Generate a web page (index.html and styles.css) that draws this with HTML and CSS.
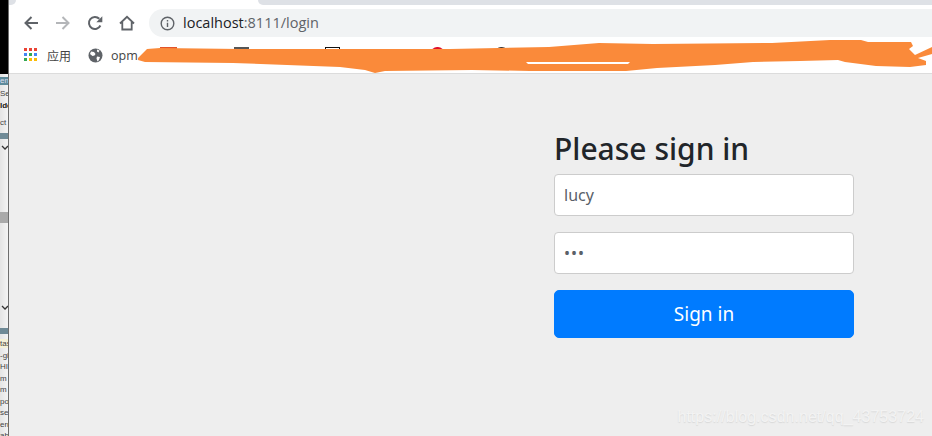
FILE: index.html
```html
<!DOCTYPE html>
<html lang="en">
<head>
<meta charset="utf-8">
<title>Please sign in</title>
<link rel="stylesheet" href="styles.css">
</head>
<body>
<div class="strip">
  <div class="strip-black"></div>
  <div class="strip-list">
    <div class="sl sl-head">em</div>
    <div class="sl sl-sev">Sev</div>
    <div class="sl sl-bold">lder</div>
    <div class="sl sl-ct">ct</div>
    <div class="folder folder-top"></div>
    <svg class="chev" width="8" height="6" viewBox="0 0 8 6"><path d="M1 1l3 3 3-3" fill="none" stroke="#333" stroke-width="1.3"/></svg>
    <div class="strip-block"></div>
    <svg class="chev chev-low" width="8" height="6" viewBox="0 0 8 6"><path d="M1 1l3 3 3-3" fill="none" stroke="#333" stroke-width="1.3"/></svg>
    <div class="folder folder-low"></div>
    <div class="sl sl-row sl-hl">tas</div>
    <div class="sl sl-row">-gi</div>
    <div class="sl sl-row">HI</div>
    <div class="sl sl-row">m</div>
    <div class="sl sl-row">m</div>
    <div class="sl sl-row">po</div>
    <div class="sl sl-row">se</div>
    <div class="sl sl-row">err</div>
    <div class="sl sl-row">ab</div>
  </div>
</div>

<div class="window">
  <div class="tabs">
    <div class="tab-left"></div>
    <div class="tab-active"></div>
    <div class="tab-rest"></div>
  </div>

  <div class="toolbar">
    <svg class="nav nav-back" width="16" height="16" viewBox="0 0 16 16"><path d="M15 8H2.500M8.500 2L2.500 8l6 6" fill="none" stroke="#5f6368" stroke-width="2"/></svg>
    <svg class="nav nav-fwd" width="16" height="16" viewBox="0 0 16 16"><path d="M1 8h12.500M7.500 2l6 6-6 6" fill="none" stroke="#b4b6b9" stroke-width="2"/></svg>
    <svg class="nav nav-reload" width="16" height="16" viewBox="0 0 16 16"><path d="M13.400 10.500A6 6 0 1 1 12.300 3.800" fill="none" stroke="#5f6368" stroke-width="2"/><path d="M15.300 1.200v6h-6z" fill="#5f6368"/></svg>
    <svg class="nav nav-home" width="16" height="16" viewBox="0 0 16 16"><path d="M1 8.500L8 1.800l7 6.700M3.300 7v7.500h9.400V7" fill="none" stroke="#5f6368" stroke-width="1.800"/></svg>
    <div class="omnibox">
      <svg class="info" width="15" height="15" viewBox="0 0 15 15"><circle cx="7.500" cy="7.500" r="6.300" fill="none" stroke="#5f6368" stroke-width="1.400"/><path d="M6.800 6.700h1.400v4.300H6.800zM6.800 4h1.400v1.400H6.800z" fill="#5f6368"/></svg>
      <span class="url"><span class="url-host">localhost</span>:8111/login</span>
    </div>
  </div>

  <div class="bookmarks">
    <div class="apps">
      <i class="r"></i><i class="r"></i><i class="r"></i>
      <i class="b"></i><i class="g"></i><i class="b"></i>
      <i class="g"></i><i class="y"></i><i class="y"></i>
    </div>
    <span class="bm-label">应用</span>
    <svg class="globe" width="15" height="15" viewBox="0 0 15 15"><circle cx="7.500" cy="7.500" r="7" fill="#5f6368"/><path d="M3 3.500l3 .5 1.500 2-1 1.500-2 .5-2.500-2zM9 8.500l3 .5-1 3-1.500 1.500-1-3zM9 1.500l2.500 1-1 2-1.500-1z" fill="#fff"/></svg>
    <span class="bm-text">opm</span>
    <div class="bm-peek peek-a"></div>
    <div class="bm-peek peek-b"></div>
    <div class="bm-peek peek-c"></div>
    <div class="bm-peek peek-d"></div>
    <div class="bm-peek peek-e"></div>
    <svg class="scribble" width="932" height="73" viewBox="0 0 932 73">
      <path fill="#fa8a3a" d="M138 58L147 49 160 48 240 49 330 49 450 49 549 47 599 43 653 44 772 43 830 40 861 40 868 42 911 42 913 46 909 49 915 55 932 47 932 54 918 58 926 61 926 65 910 67 876 66 845 62 838 60 800 61 753 62 715 65 657 68 626 71 530 71 472 70 385 71 375 73 365 70 340 67 233 63 145 62 138 60Z"/>
      <path fill="#fff" d="M526 62H630L628 64H528Z"/>
    </svg>
  </div>

  <main class="page">
    <form class="signin">
      <h1 class="signin-title">Please sign in</h1>
      <input class="field field-user" type="text" value="lucy">
      <input class="field field-pass" type="password" value="abc">
      <button class="submit" type="button">Sign in</button>
    </form>
    <div class="watermark">https://blog.csdn.net/qq_43753724</div>
  </main>
</div>
</body>
</html>
```

FILE: styles.css
```css
* { margin:0; padding:0; box-sizing:border-box; }
html, body { width:100%; height:100%; overflow:hidden; }
body { display:flex; background:#eee; font-family:"Noto Sans", "Open Sans", "Noto Sans CJK SC", sans-serif; color:#212529; }

/* window peeking out at the left edge */
.strip { width:9px; flex:none; height:436px; overflow:hidden; border-right:1px solid #6d6d6d; background:linear-gradient(to right, #e4e4e4, #f4f4f4); }
.strip-black { height:74px; margin-right:-1px; background:#000; }
.strip-list { display:flex; flex-direction:column; font:8px/9px "Liberation Sans", sans-serif; color:#444; white-space:nowrap; overflow:hidden; }
.sl { height:9px; flex:none; overflow:hidden; }
.sl-head { background:#5d8b9b; color:#dde; height:8px; margin-top:3px; line-height:8px; }
.sl-sev { margin-top:4px; }
.sl-bold { margin-top:3px; font-weight:700; color:#111; }
.sl-ct { margin-top:8px; }
.folder { width:8px; height:6px; flex:none; background:#6f8a96; }
.folder-top { margin-top:6px; }
.chev { flex:none; margin-top:6px; margin-left:1px; }
.strip-block { height:11px; flex:none; margin-top:61px; background:#a9a9a9; }
.chev-low { margin-top:82px; }
.folder-low { margin-top:17px; }
.sl-row { margin-top:2.500px; }
.sl-hl { background:#f5f1d6; margin-top:5px; }

.window { flex:1; min-width:0; display:flex; flex-direction:column; }

/* tab strip */
.tabs { display:flex; height:9px; flex:none; background:#fff; }
.tab-left { width:7px; height:5px; background:#dee1e6; border-bottom-right-radius:5px; }
.tab-active { width:242px; }
.tab-rest { flex:1; height:5px; background:#dee1e6; border-bottom-left-radius:6px; }

.toolbar { display:flex; align-items:center; height:28px; flex:none; background:#fff; padding-left:14px; }
.nav { flex:none; margin-right:16px; }
.nav-home { margin-right:14px; }
.omnibox { flex:1; height:28px; display:flex; align-items:center; gap:8px; padding-left:11px; background:#f1f3f4; border-radius:14px 0 0 14px; }
.url { font:14.500px/28px "Open Sans", sans-serif; color:#5f6368; }
.url-host { color:#202124; }

/* bookmarks bar */
.bookmarks { position:relative; display:flex; align-items:center; height:37px; flex:none; background:#fff; border-bottom:1px solid #dcdcdc; padding-left:15px; font-size:12px; color:#444; }
.apps { display:grid; grid-template-columns:repeat(3, 3px); grid-auto-rows:3px; gap:2px; margin-top:-1px; }
.apps i { display:block; }
.apps .r { background:#ea4335; }
.apps .b { background:#4285f4; }
.apps .g { background:#34a853; }
.apps .y { background:#fbbc05; }
.bm-label { margin-left:10px; font-family:"Noto Sans CJK SC", sans-serif; }
.globe { margin-left:17px; }
.bm-text { margin-left:8px; font:12.500px "Open Sans", sans-serif; }
.bm-peek { position:absolute; top:10px; width:15px; height:6px; }
.peek-a { left:151px; width:17px; background:#e2542a; }
.peek-b { left:225px; background:#555; }
.peek-c { left:316px; border:1px solid #111; background:#fff; }
.peek-d { left:422px; width:13px; background:#e0102a; border-radius:7px 7px 0 0; }
.peek-e { left:486px; width:13px; background:#333; border-radius:7px 7px 0 0; }
.scribble { position:absolute; left:-9px; top:-37px; pointer-events:none; }

/* page */
.page { position:relative; flex:1; background:#eee; padding:55px 0 0 545px; }
.signin { display:flex; flex-direction:column; width:300px; }
.signin-title { font-size:30px; font-weight:500; line-height:40px; margin-bottom:5px; color:#212529; }
.field { width:100%; height:42px; padding:0 9px; font:16px "Noto Sans", "Open Sans", sans-serif; color:#5a6168; background:#fff; border:1px solid #ccc; border-radius:4px; outline:none; }
.field-user { margin-bottom:16px; }
.field-pass { margin-bottom:16px; letter-spacing:1px; }
.submit { height:48px; font:19px "Noto Sans", "Open Sans", sans-serif; color:#fff; background:#007bff; border:1px solid #007bff; border-radius:5px; cursor:pointer; }
.watermark { position:absolute; right:8px; bottom:10px; font:16px "Liberation Sans", sans-serif; letter-spacing:.03px; color:#f3f3f3; text-shadow:0 1px 1px #d8d8d8; white-space:nowrap; }
```
